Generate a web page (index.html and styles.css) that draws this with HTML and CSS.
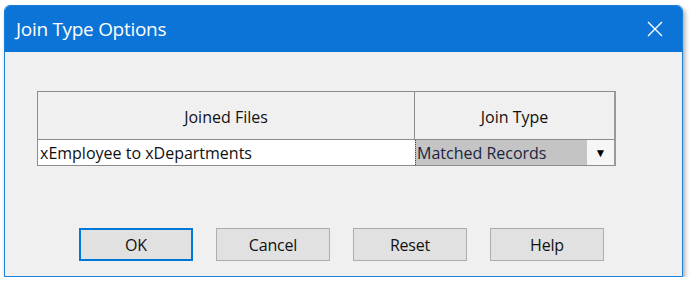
FILE: index.html
```html
<!DOCTYPE html>
<html lang="en">
<head>
    <meta charset="UTF-8">
    <title>Join Type Options</title>
    <link rel="stylesheet" href="styles.css">
</head>
<body>
    <div class="dialog">
        <div class="title-bar">
            <span class="title">Join Type Options</span>
            <svg class="close" width="16" height="16" viewBox="0 0 16 16">
                <path d="M1 1 L15 15 M15 1 L1 15" stroke="#fff" stroke-width="1.4" fill="none"/>
            </svg>
        </div>

        <div class="content">
            <div class="grid">
                <div class="head-cell">Joined Files</div>
                <div class="head-cell last">Join Type</div>
                <div class="cell">xEmployee to xDepartments</div>
                <div class="cell select">
                    <span>Matched Records</span>
                    <span class="drop">&#9660;</span>
                </div>
            </div>

            <div class="buttons">
                <button class="default">OK</button>
                <button>Cancel</button>
                <button>Reset</button>
                <button>Help</button>
            </div>
        </div>
    </div>
</body>
</html>
```

FILE: styles.css
```css
* {
    box-sizing: border-box;
    margin: 0;
    padding: 0;
}

body {
    background: #fff;
    font-family: "Open Sans", "Noto Sans", sans-serif;
    padding: 5px 0 0 4px;
}

.dialog {
    width: 679px;
    height: 272px;
    border: 1px solid #1a7fd8;
    border-radius: 6px 6px 0 0;
    background: #f0f0f0;
    box-shadow: 2px 3px 5px rgba(0, 0, 0, 0.35);
    display: flex;
    flex-direction: column;
    overflow: hidden;
}

.title-bar {
    height: 46px;
    background: #0b74d6;
    display: flex;
    align-items: center;
    justify-content: space-between;
    padding: 0 19px 0 11px;
    color: #fff;
}

.title {
    font-size: 19px;
    letter-spacing: -0.3px;
}

.content {
    flex: 1;
    padding: 39px 0 0 32px;
}

.grid {
    width: 579px;
    display: grid;
    grid-template-columns: 377px 1fr;
    grid-template-rows: 48px 25px;
    border: 1px solid #8c8c8c;
    border-right: 2px solid #9a9a9a;
    font-size: 16px;
    color: #111;
}

.head-cell {
    display: flex;
    align-items: center;
    justify-content: center;
    padding-top: 2px;
    border-right: 1px solid #8c8c8c;
    border-bottom: 1px solid #8c8c8c;
}

.head-cell.last {
    border-right: none;
}

.cell {
    background: #fff;
    display: flex;
    align-items: center;
    padding-left: 2px;
}

.cell.select {
    background: #c4c4c4;
    border-left: 1px dotted #444;
    justify-content: space-between;
    padding-left: 1px;
    color: #1a2440;
}

.drop {
    width: 27px;
    height: 100%;
    background: #f6f6f6;
    display: flex;
    align-items: center;
    justify-content: center;
    font-size: 12px;
    color: #000;
}

.buttons {
    display: flex;
    gap: 23px;
    padding: 62px 0 0 42px;
}

button {
    width: 114px;
    height: 33px;
    background: #e1e1e1;
    border: 1px solid #adadad;
    font-family: "Open Sans", "Noto Sans", sans-serif;
    font-size: 16px;
    letter-spacing: -0.2px;
    color: #111;
}

button.default {
    border: 2px solid #0078d7;
}
```
